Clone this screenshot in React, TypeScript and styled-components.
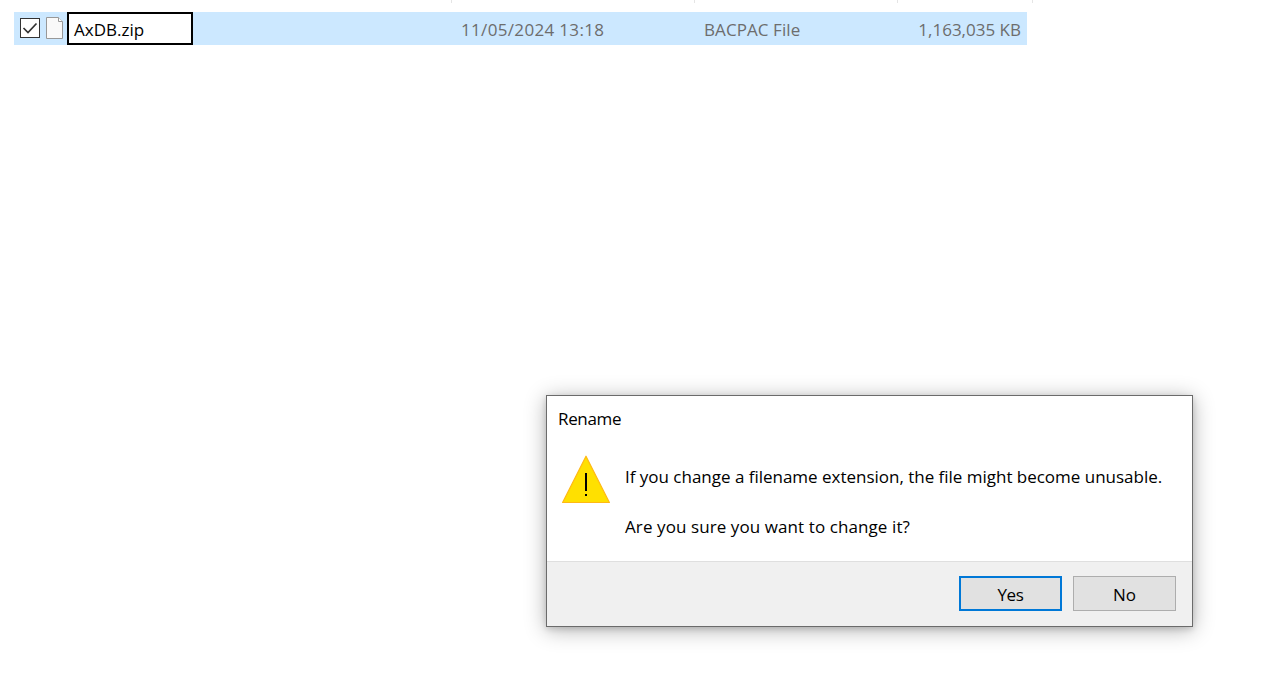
import React from "react";
import styled, { createGlobalStyle } from "styled-components";

const GlobalStyle = createGlobalStyle`
  * { box-sizing: border-box; }
  html, body { margin: 0; padding: 0; background: #fff; }
  body { overflow: hidden; }
`;

const Desktop = styled.main`
  position: relative;
  width: 1274px;
  height: 674px;
  overflow: hidden;
  background: #fff;
  color: #000;
  font-family: "Open Sans", "Noto Sans", sans-serif;
  font-size: 17px;
  line-height: 25px;
  white-space: nowrap;
`;

const ColumnHeader = styled.div`
  display: grid;
  grid-template-columns: 437px 243px 203px 135px;
  height: 3px;
  margin-left: 15px;
`;

const ColumnEdge = styled.div`
  border-right: 1px solid #e5e5e5;
`;

const FileRow = styled.div`
  display: grid;
  grid-template-columns: 437px 243px 203px 130px;
  width: 1013px;
  height: 33px;
  margin: 9px 0 0 14px;
  background: #cce8ff;
  color: #6d6d6d;
`;

const NameCell = styled.div`
  display: flex;
  align-items: center;
  padding-left: 6px;
`;

const CheckBox = styled.span`
  display: flex;
  width: 20px;
  height: 20px;
  margin-right: 6px;
  margin-top: -1px;
  border: 1px solid #333;
  background: #fff;
`;

const FileIcon = styled.svg`
  display: block;
  width: 17px;
  height: 22px;
  margin-right: 4px;
  margin-top: -1px;
`;

const NameEditor = styled.div`
  width: 126px;
  height: 33px;
  padding: 3px 0 0 5px;
  border: 2px solid #000;
  background: #fff;
  color: #000;
`;

const Cell = styled.div<{ $right?: boolean }>`
  padding: 5px 6px 0 10px;
  text-align: ${(p) => (p.$right ? "right" : "left")};
`;

const Fitted = styled.span<{ $spacing?: number }>`
  letter-spacing: ${(p) => p.$spacing ?? 0}px;
`;

const Dialog = styled.section`
  position: absolute;
  left: 546px;
  top: 395px;
  display: flex;
  flex-direction: column;
  width: 647px;
  height: 232px;
  border: 1px solid #6b6b6b;
  background: #fff;
  box-shadow: 0 3px 20px rgba(0, 0, 0, 0.3), 0 2px 6px rgba(0, 0, 0, 0.15);
`;

const DialogTitle = styled.div`
  height: 59px;
  padding: 10px 0 0 11px;
`;

const DialogBody = styled.div`
  display: flex;
  flex: 1;
  padding-left: 15px;
`;

const WarningIcon = styled.svg`
  display: block;
  width: 49px;
  height: 49px;
  margin-right: 14px;
`;

const Message = styled.div`
  display: flex;
  flex-direction: column;
  gap: 25px;
  padding-top: 9px;
`;

const Footer = styled.footer`
  display: flex;
  justify-content: flex-end;
  gap: 11px;
  height: 65px;
  padding: 14px 16px 0 0;
  border-top: 1px solid #dfdfdf;
  background: #f0f0f0;
`;

const Button = styled.button<{ $primary?: boolean }>`
  width: 103px;
  height: 35px;
  padding: 2px 0 0;
  border: ${(p) => (p.$primary ? "2px solid #0078d7" : "1px solid #adadad")};
  background: #e1e1e1;
  color: #000;
  font: inherit;
`;

export default function App() {
  return (
    <Desktop>
      <GlobalStyle />
      <ColumnHeader>
        <ColumnEdge />
        <ColumnEdge />
        <ColumnEdge />
        <ColumnEdge />
      </ColumnHeader>
      <FileRow>
        <NameCell>
          <CheckBox>
            <svg width="18" height="18" viewBox="0 0 18 18">
              <path d="M2.5 9 L7 13.5 L15.5 4.5" fill="none" stroke="#333" strokeWidth="1.7" />
            </svg>
          </CheckBox>
          <FileIcon viewBox="0 0 17 22">
            <path d="M.5 .5H12.5L16.5 4.5V21.5H.5Z" fill="#f9f9f9" stroke="#989898" />
            <path d="M12.5 .5V4.5H16.5" fill="#fff" stroke="#989898" />
          </FileIcon>
          <NameEditor>
            <Fitted>AxDB.zip</Fitted>
          </NameEditor>
        </NameCell>
        <Cell>
          <Fitted $spacing={0.33}>11/05/2024 13:18</Fitted>
        </Cell>
        <Cell>
          <Fitted $spacing={0.08}>BACPAC File</Fitted>
        </Cell>
        <Cell $right>
          <Fitted>1,163,035 KB</Fitted>
        </Cell>
      </FileRow>
      <Dialog>
        <DialogTitle>
          <Fitted $spacing={-0.35}>Rename</Fitted>
        </DialogTitle>
        <DialogBody>
          <WarningIcon viewBox="0 0 49 49">
            <path d="M24 1.2 L47.4 47.5 H.6 Z" fill="#ffe000" stroke="#ffb914" strokeWidth="1.2" strokeLinejoin="round" />
            <path d="M23 18h2v18h-2zM23 39h2v2h-2z" fill="#000" />
          </WarningIcon>
          <Message>
            <Fitted $spacing={-0.015}>If you change a filename extension, the file might become unusable.</Fitted>
            <Fitted $spacing={0.09}>Are you sure you want to change it?</Fitted>
          </Message>
        </DialogBody>
        <Footer>
          <Button $primary>
            <Fitted $spacing={-0.4}>Yes</Fitted>
          </Button>
          <Button>
            <Fitted>No</Fitted>
          </Button>
        </Footer>
      </Dialog>
    </Desktop>
  );
}
